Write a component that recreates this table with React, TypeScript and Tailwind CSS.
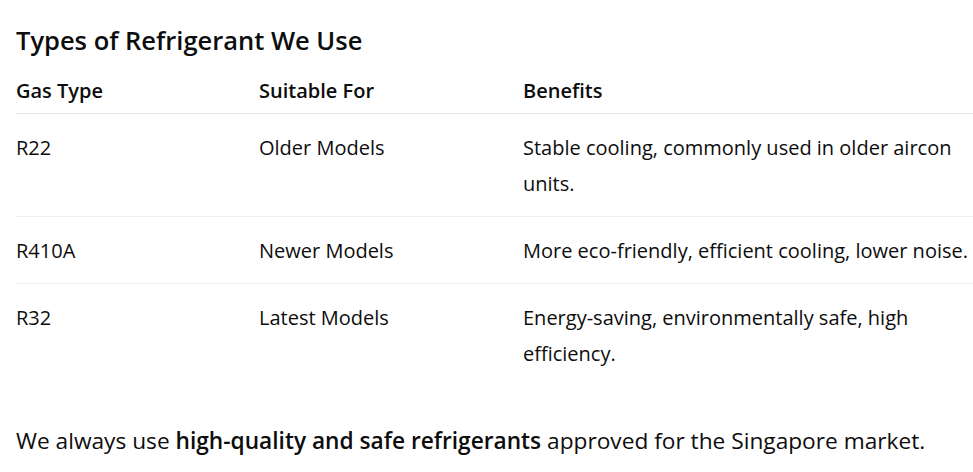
import React from "react";

const rows = [
  ["R22", "Older Models", "Stable cooling, commonly used in older aircon units."],
  ["R410A", "Newer Models", "More eco-friendly, efficient cooling, lower noise."],
  ["R32", "Latest Models", "Energy-saving, environmentally safe, high efficiency."],
];

export default function App() {
  return (
    <div
      className="w-[973px] h-[472px] overflow-hidden bg-white text-[#0d0d0d] pl-4"
      style={{ fontFamily: '"Open Sans", "Noto Sans", sans-serif' }}
    >
      <h3 className="pt-[24px] text-[25.5px] leading-[32px] font-semibold">Types of Refrigerant We Use</h3>
      <table className="w-[957px] table-fixed border-collapse text-[20px] leading-[36px] mt-[13px]">
        <thead>
          <tr className="border-b border-[#e3e3e3]">
            <th className="w-[243px] text-left font-semibold py-[4px]">Gas Type</th>
            <th className="w-[264px] text-left font-semibold py-[4px]">Suitable For</th>
            <th className="text-left font-semibold py-[4px]">Benefits</th>
          </tr>
        </thead>
        <tbody>
          {rows.map((r, i) => (
            <tr key={i} className={i < rows.length - 1 ? "border-b border-[#efefef]" : ""}>
              <td className="align-top pt-[16px] pb-[14px]">{r[0]}</td>
              <td className="align-top pt-[16px] pb-[14px]">{r[1]}</td>
              <td className="align-top pt-[16px] pb-[14px]">{r[2]}</td>
            </tr>
          ))}
        </tbody>
      </table>
      <p className="mt-[39px] text-[22.7px] leading-[32px]">
        We always use <strong className="font-semibold">high-quality and safe refrigerants</strong> approved for the Singapore market.
      </p>
    </div>
  );
}
